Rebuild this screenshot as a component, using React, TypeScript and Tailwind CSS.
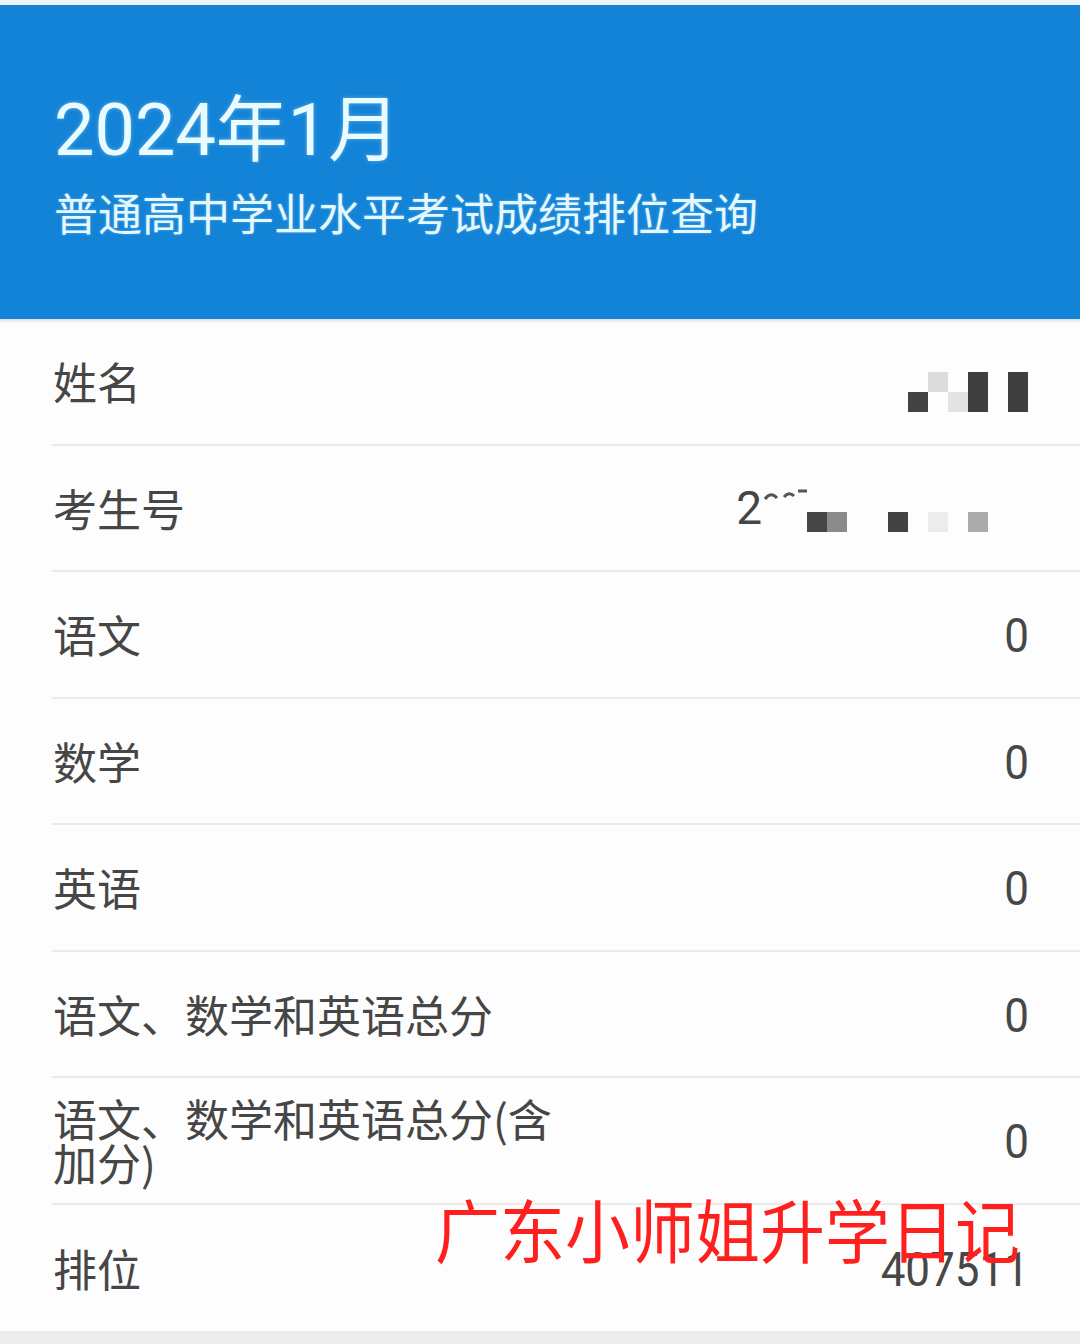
import React from "react";

const CJK = "font-['Noto_Sans_CJK_SC',sans-serif]";
const NUM = "font-['Roboto','Noto_Sans_CJK_SC',sans-serif]";

const SCORES = [
  { label: "语文", value: "0" },
  { label: "数学", value: "0" },
  { label: "英语", value: "0" },
  { label: "语文、数学和英语总分", value: "0" },
  { label: "语文、数学和英语总分(含加分)", value: "0" },
];

// mosaic cells for the blurred name, 6 cols x 2 rows
const NAME_CELLS = [
  "", "bg-[#dcdcdc]", "", "bg-[#3f3f3f]", "", "bg-[#3f3f3f]",
  "bg-[#434343]", "", "bg-[#e3e3e3]", "bg-[#3f3f3f]", "", "bg-[#3f3f3f]",
];

function Row({ label, children, last }: { label: React.ReactNode; children: React.ReactNode; last?: boolean }) {
  return (
    <div className="flex h-[126.5px] flex-col">
      <div className="flex flex-1 items-center justify-between pl-[53px] pr-[51px]">
        <div className={`${CJK} max-w-[520px] text-[44px] leading-[44px] text-[#464646]`}>{label}</div>
        {children}
      </div>
      {!last && <div className="ml-[52px] h-[2px] bg-[#ebebeb]" />}
    </div>
  );
}

function Value({ children }: { children: React.ReactNode }) {
  return <div className={`${NUM} mt-[4px] scale-y-[1.08] text-[44px] leading-none text-[#474747]`}>{children}</div>;
}

export default function App() {
  return (
    <div className="relative h-[1344px] w-[1080px] overflow-hidden bg-[#fdfdfd]">
      <div className="h-[5px] bg-[#eef3f8]" />
      <header className="flex h-[314px] flex-col bg-[#1283d7] px-[54px] pt-[84px] shadow-[0_2px_3px_rgba(0,0,0,0.12)]">
        <h1 className={`${NUM} text-[72px] leading-[84px] text-[#e8fbff] [text-shadow:0_0_4px_rgba(255,255,255,0.35)]`}>
          2024年1月
        </h1>
        <p className={`${CJK} mt-[14px] text-[44px] leading-[50px] text-[#e3f8ff] [text-shadow:0_0_3px_rgba(255,255,255,0.3)]`}>
          普通高中学业水平考试成绩排位查询
        </p>
      </header>

      <main>
        <Row label="姓名">
          <div className="mr-[1px] mt-[22px] grid grid-cols-[repeat(6,20px)] grid-rows-[20px_20px]">
            {NAME_CELLS.map((c, i) => (
              <div key={i} className={c} />
            ))}
          </div>
        </Row>
        <Row label="考生号">
          <div className="mr-[41px] flex items-end">
            <span className={`${NUM} text-[46px] leading-none text-[#454545]`}>2</span>
            <svg width="45" height="40" viewBox="0 0 45 40" className="mb-[4px]">
              <path d="M3 12 Q9 4 15 11" stroke="#555" strokeWidth="3" fill="none" />
              <path d="M22 10 Q27 4 32 9" stroke="#555" strokeWidth="3" fill="none" />
              <path d="M36 4 H45" stroke="#555" strokeWidth="3" />
            </svg>
            <div className="mb-[-1px] flex">
              <div className="h-[20px] w-[20px] bg-[#464646]" />
              <div className="h-[20px] w-[20px] bg-[#8b8b8b]" />
              <div className="ml-[41px] h-[20px] w-[20px] bg-[#434343]" />
              <div className="ml-[20px] h-[20px] w-[20px] bg-[#ececec]" />
              <div className="ml-[20px] h-[20px] w-[20px] bg-[#ababab]" />
            </div>
          </div>
        </Row>
        {SCORES.map((s) => (
          <Row key={s.label} label={s.label}>
            <Value>{s.value}</Value>
          </Row>
        ))}
        <Row label="排位" last>
          <Value>407511</Value>
        </Row>
      </main>
      <div className="h-[13px] bg-[#ececec]" />

      <div
        className={`${CJK} pointer-events-none absolute left-[435px] top-[1194px] origin-top scale-y-[1.06] text-[65px] font-normal leading-none text-[#ff1f1f]`}
      >
        广东小师姐升学日记
      </div>
    </div>
  );
}
